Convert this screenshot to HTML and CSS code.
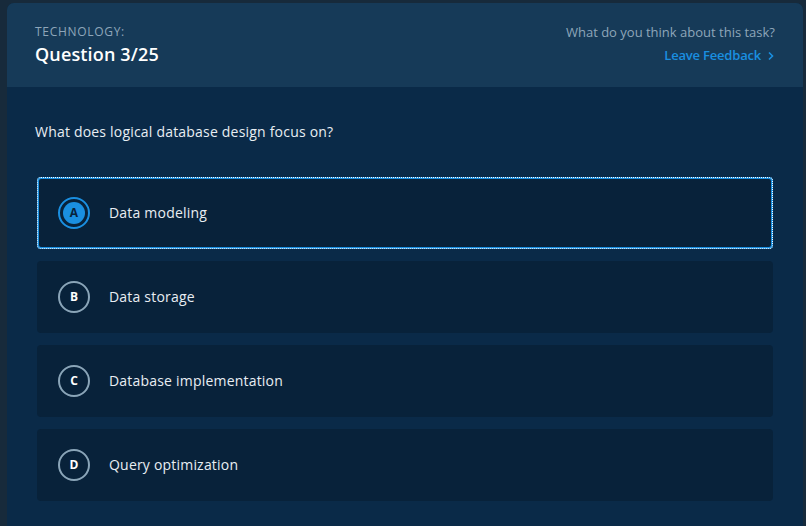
FILE: index.html
```html
<!DOCTYPE html>
<html>
<head>
<meta charset="utf-8">
<link rel="stylesheet" href="styles.css">
</head>
<body>
<div class="page">
  <div class="card">
    <header class="head">
      <div class="head-left">
        <div class="category">TECHNOLOGY:</div>
        <div class="title">Question 3/25</div>
      </div>
      <div class="head-right">
        <div class="ask">What do you think about this task?</div>
        <a class="feedback">Leave Feedback
          <svg width="8" height="10" viewBox="0 0 8 10"><path d="M2 1.5 L5.5 5 L2 8.5" fill="none" stroke="currentColor" stroke-width="1.6"/></svg>
        </a>
      </div>
    </header>
    <main class="body">
      <p class="question">What does logical database design focus on?</p>
      <div class="options">
        <div class="option selected"><span class="badge"><span class="letter">A</span></span><span class="label">Data modeling</span></div>
        <div class="option"><span class="badge"><span class="letter">B</span></span><span class="label">Data storage</span></div>
        <div class="option"><span class="badge"><span class="letter">C</span></span><span class="label">Database implementation</span></div>
        <div class="option"><span class="badge"><span class="letter">D</span></span><span class="label">Query optimization</span></div>
      </div>
    </main>
  </div>
</div>
</body>
</html>
```
FILE: styles.css
```css
* { box-sizing: border-box; }
html, body { margin: 0; height: 100%; }
body {
  background: #172a3b;
  font-family: "Open Sans", "Noto Sans", sans-serif;
  color: #e8eef3;
  overflow: hidden;
}
.page {
  padding: 3px 3px 0 7px;
  height: 100%;
}
.card {
  height: 100%;
  border-radius: 7px 7px 0 0;
  overflow: hidden;
  background: #0a2a48;
  display: flex;
  flex-direction: column;
}
.head {
  height: 84px;
  background: #163a58;
  display: flex;
  justify-content: space-between;
  padding: 20px 28px 0 28px;
}
.category {
  font-size: 12px;
  letter-spacing: 0.7px;
  color: #8ea6ba;
  line-height: 18px;
}
.title {
  font-size: 18px;
  font-weight: 600;
  letter-spacing: 0.15px;
  color: #ffffff;
  line-height: 26px;
}
.head-right {
  display: flex;
  flex-direction: column;
  align-items: flex-end;
}
.ask {
  font-size: 13px;
  color: #8ea6ba;
  line-height: 18px;
}
.feedback {
  margin-top: 5px;
  font-size: 13px;
  font-weight: 600;
  letter-spacing: -0.2px;
  color: #1a8fe0;
  line-height: 18px;
  display: flex;
  align-items: center;
  gap: 6px;
}
.feedback svg { margin-top: 1px; }
.body {
  flex: 1;
  padding: 35px 30px 0 30px;
}
.question {
  margin: 0 0 0 -2px;
  font-size: 14px;
  letter-spacing: 0.2px;
  line-height: 20px;
  color: #e8eef3;
}
.options {
  margin-top: 35px;
  display: flex;
  flex-direction: column;
  gap: 12px;
}
.option {
  height: 72px;
  background: #08223a;
  border: 2px solid transparent;
  border-radius: 4px;
  display: flex;
  align-items: center;
  padding-left: 19px;
  padding-bottom: 1px;
  gap: 19px;
}
.option.selected {
  border-color: #1a8fe0;
  outline: 1px dotted #ffffff;
  outline-offset: -1px;
}
.badge {
  width: 32px;
  height: 32px;
  border-radius: 50%;
  border: 2px solid #8aa5b8;
  display: flex;
  align-items: center;
  justify-content: center;
}
.letter {
  font-size: 12px;
  font-weight: 700;
  color: #ffffff;
}
.selected .badge {
  border-color: #1a8fe0;
}
.selected .letter {
  width: 22px;
  height: 22px;
  border-radius: 50%;
  background: #1a8fe0;
  color: #08223a;
  display: flex;
  align-items: center;
  justify-content: center;
}
.label {
  font-size: 14px;
  letter-spacing: 0.2px;
  color: #e8eef3;
}
```
